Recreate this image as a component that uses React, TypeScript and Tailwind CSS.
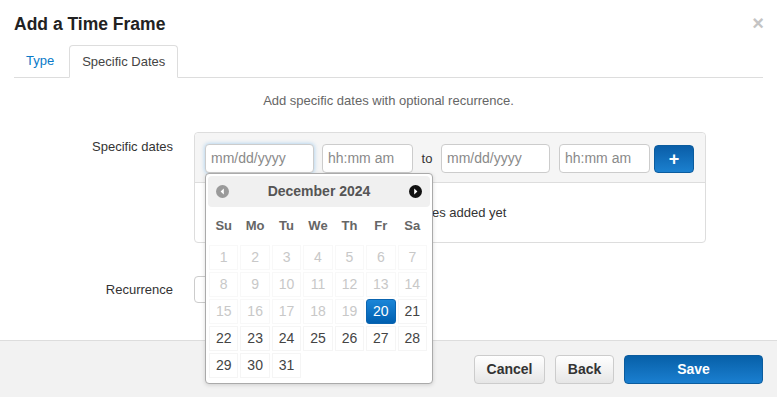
import React from "react";

const PrevIcon = () => (
  <svg width="13" height="13" viewBox="0 0 13 13">
    <circle cx="6.5" cy="6.5" r="6.5" fill="#9a9a9a" />
    <path d="M7.8 3.6 L4.6 6.5 L7.8 9.4 Z" fill="#fff" />
  </svg>
);
const NextIcon = () => (
  <svg width="13" height="13" viewBox="0 0 13 13">
    <circle cx="6.5" cy="6.5" r="6.5" fill="#111" />
    <path d="M5.2 3.6 L8.4 6.5 L5.2 9.4 Z" fill="#fff" />
  </svg>
);

function DatePicker() {
  const days: number[] = [];
  for (let i = 1; i <= 31; i++) days.push(i);
  return (
    <div className="absolute left-0 top-[29px] z-20 w-[228px] h-[211px] bg-white border border-[#aaa] rounded-[4px] shadow-[0_1px_4px_rgba(0,0,0,0.15)] p-[2px]">
      <div className="h-[31px] bg-[#f0f0f0] rounded-[4px] flex items-center justify-between px-[8px]">
        <PrevIcon />
        <span className="text-[14px] font-bold text-[#555]">December 2024</span>
        <NextIcon />
      </div>
      <div className="ml-[1px] w-[218px]">
        <div className="grid grid-cols-7 gap-x-[2px] h-[38px] items-center text-[13px] font-bold text-[#666]">
          {["Su", "Mo", "Tu", "We", "Th", "Fr", "Sa"].map((d) => (
            <div key={d} className="text-center">{d}</div>
          ))}
        </div>
        <div className="grid grid-cols-7 gap-[2px]">
          {days.map((n) => {
            const disabled = n < 20;
            const selected = n === 20;
            return (
              <div
                key={n}
                className={
                  selected
                    ? "h-[25px] flex items-center justify-center text-[14px] rounded-[3px] text-white bg-linear-to-b from-[#1a86d8] to-[#005fb0] border border-[#0a64b0]"
                    : disabled
                    ? "h-[25px] flex items-center justify-center text-[14px] text-[#c8c8c8] border border-[#f8f8f8]"
                    : "h-[25px] flex items-center justify-center text-[14px] text-[#444] border border-[#f5f5f5]"
                }
              >
                {n}
              </div>
            );
          })}
        </div>
      </div>
    </div>
  );
}

export default function App() {
  const inputBase =
    "h-[29px] border border-[#ccc] rounded-[4px] px-[5px] flex items-center text-[14px] text-[#8a8a8a] bg-white";
  return (
    <div className="w-[777px] h-[397px] overflow-hidden bg-white flex flex-col font-['Liberation_Sans',Arial,sans-serif] text-[#333]">
      <div className="h-[340px] relative">
        <div className="flex items-start justify-between pl-[14px] pr-[13px] pt-[12px]">
          <h1 className="text-[17.5px] leading-[24px] font-bold text-[#222]">Add a Time Frame</h1>
          <span className="text-[20px] leading-[18px] font-bold text-[#c4c4c4] mt-[2px]">×</span>
        </div>
        <div className="mx-[14px] mt-[9px] h-[33px] flex items-end border-b border-[#ddd]">
          <div className="h-[32px] px-[12px] flex items-center text-[13px] text-[#0a7ac8]">Type</div>
          <div className="ml-[3px] h-[33px] -mb-px px-[12px] flex items-center text-[13px] text-[#444] bg-white border border-[#ddd] border-b-white rounded-t-[4px]">
            Specific Dates
          </div>
        </div>
        <p className="mt-[14px] text-center text-[13px] leading-[18px] text-[#666]">
          Add specific dates with optional recurrence.
        </p>
        <div className="mt-[22px] flex">
          <div className="w-[173px] text-right text-[13px] leading-[18px] pt-[6px] text-[#333]">Specific dates</div>
          <div className="ml-[21px] w-[512px] border border-[#ddd] rounded-[4px]">
            <div className="bg-[#f5f5f5] border-b border-[#ddd] pl-[10px] pt-[11px] pb-[9px] flex items-center rounded-t-[4px]">
              <div className="relative">
                <div className={`${inputBase} w-[109px] border-[#66afe9] shadow-[0_0_4px_rgba(102,175,233,0.6)]`}>mm/dd/yyyy</div>
                <DatePicker />
              </div>
              <div className={`${inputBase} w-[91px] ml-[8px]`}>hh:mm am</div>
              <span className="w-[28px] text-center text-[13px] text-[#333]">to</span>
              <div className={`${inputBase} w-[109px]`}>mm/dd/yyyy</div>
              <div className={`${inputBase} w-[91px] ml-[9px]`}>hh:mm am</div>
              <button className="ml-[4px] w-[40px] h-[28px] rounded-[4px] bg-linear-to-b from-[#0a5ea8] to-[#1b80cf] border border-[#0b5c9e] flex items-center justify-center text-white text-[18px] font-bold leading-none">
                +
              </button>
            </div>
            <div className="h-[59px] flex items-center justify-center text-[13px] text-[#333]">No dates added yet</div>
          </div>
        </div>
        <div className="mt-[33px] flex items-center">
          <div className="w-[173px] text-right text-[13px] leading-[27px] text-[#333]">Recurrence</div>
          <div className="ml-[21px] w-[200px] h-[27px] border border-[#ccc] rounded-[4px] bg-white" />
        </div>
      </div>
      <div className="flex-1 bg-[#f2f2f2] border-t border-[#ddd] flex items-start justify-end pr-[14px] pt-[14px] gap-[10px]">
        <button className="w-[71px] h-[29px] rounded-[4px] border border-[#ccc] bg-linear-to-b from-white to-[#e6e6e6] text-[14px] font-bold text-[#333]">Cancel</button>
        <button className="w-[59px] h-[29px] rounded-[4px] border border-[#ccc] bg-linear-to-b from-white to-[#e6e6e6] text-[14px] font-bold text-[#333]">Back</button>
        <button className="w-[139px] h-[29px] rounded-[4px] border border-[#0b5c9e] bg-linear-to-b from-[#0760a8] to-[#1a7fd0] text-[14px] font-bold text-white">Save</button>
      </div>
    </div>
  );
}
